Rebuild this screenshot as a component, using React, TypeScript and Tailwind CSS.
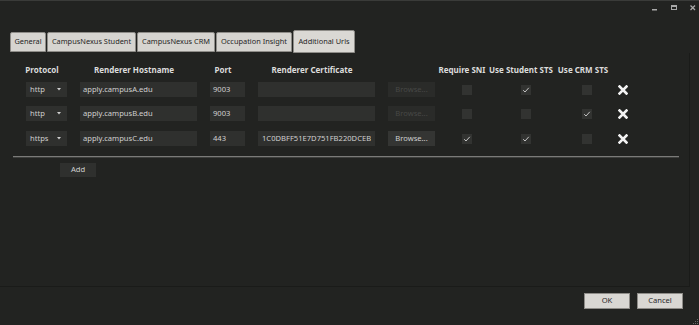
import React from "react";

const tabs = [
  { label: "General", w: 36, active: false },
  { label: "CampusNexus Student", w: 89, active: false },
  { label: "CampusNexus CRM", w: 78, active: false },
  { label: "Occupation Insight", w: 76, active: false },
  { label: "Additional Urls", w: 62, active: true },
];

type Row = {
  protocol: string;
  host: string;
  port: string;
  cert: string;
  browse: boolean;
  sni: boolean;
  student: boolean;
  crm: boolean;
};

const rows: Row[] = [
  { protocol: "http", host: "apply.campusA.edu", port: "9003", cert: "", browse: false, sni: false, student: true, crm: false },
  { protocol: "http", host: "apply.campusB.edu", port: "9003", cert: "", browse: false, sni: false, student: false, crm: true },
  { protocol: "https", host: "apply.campusC.edu", port: "443", cert: "1C0DBFF51E7D751FB220DCEB", browse: true, sni: true, student: true, crm: false },
];

function Check({ on, className }: { on: boolean; className: string }) {
  return (
    <div className={`flex-none w-[10px] h-[10px] bg-[#323331] flex items-center justify-center ${className}`}>
      {on && (
        <svg width="8" height="8" viewBox="0 0 8 8">
          <path d="M1.2 4.2 L3 6 L6.8 1.8" fill="none" stroke="#c4c4c4" strokeWidth="1" />
        </svg>
      )}
    </div>
  );
}

function Remove() {
  return (
    <svg className="flex-none ml-[26px]" width="10" height="10" viewBox="0 0 10 10">
      <path d="M1.5 1.5 L8.5 8.5 M8.5 1.5 L1.5 8.5" stroke="#f2f2f2" strokeWidth="2.6" strokeLinecap="square" />
    </svg>
  );
}

export default function App() {
  const font = "font-['Noto_Sans',sans-serif]";
  return (
    <div className={`relative w-[699px] h-[325px] bg-[#222321] flex flex-col overflow-hidden ${font} text-[7.6px]`}>
      <div className="h-px bg-[#3a3b39] flex-none" />
      {/* title bar */}
      <div className="h-[29px] flex-none flex justify-end items-start">
        <svg className="mt-[2px]" width="50" height="10" viewBox="0 0 50 10">
          <rect x="3" y="6" width="5" height="1.5" fill="#a8a8a8" />
          <rect x="22.5" y="2.5" width="5" height="4" fill="none" stroke="#a8a8a8" strokeWidth="1" />
          <rect x="22.5" y="2.5" width="5" height="1.5" fill="#a8a8a8" />
          <path d="M41.5 2.5 L46 7 M46 2.5 L41.5 7" stroke="#a8a8a8" strokeWidth="1.3" />
        </svg>
      </div>
      {/* tabs */}
      <div className="h-[23px] flex-none flex items-start pl-[10px] gap-[1px]">
        {tabs.map((t) => (
          <div
            key={t.label}
            style={{ width: t.w }}
            className={`flex-none flex items-center justify-center whitespace-nowrap text-[#262626] text-[7.4px] bg-[#d6d4d0] border border-[#8e8c88] rounded-t-[2px] ${
              t.active ? "h-[23px] bg-[#dad8d4]" : "h-[20px] mt-[2px]"
            }`}
          >
            {t.label}
          </div>
        ))}
      </div>
      {/* panel */}
      <div className="w-[690px] h-[234px] flex-none border-r border-b border-[#1a1b19] flex flex-col">
        {/* header */}
        <div className="mt-[11px] h-[11px] flex items-center font-bold text-[8px] text-[#dcdcdc] whitespace-nowrap">
          <span className="flex-none ml-[20px] w-[44px] text-center">Protocol</span>
          <span className="flex-none ml-[20px] w-[100px] text-center">Renderer Hostname</span>
          <span className="flex-none ml-[24px] w-[30px] text-center">Port</span>
          <span className="flex-none ml-[24px] w-[100px] text-center">Renderer Certificate</span>
          <span className="flex-none ml-[75px] w-[50px] text-center">Require SNI</span>
          <span className="flex-none ml-[1px] w-[66px] text-center">Use Student STS</span>
          <span className="flex-none ml-[1px] w-[56px] text-center">Use CRM STS</span>
        </div>
        {rows.map((r, i) => (
          <div
            key={i}
            className={`h-[15px] flex items-center text-[#cfcfcf] whitespace-nowrap ${
              i === 0 ? "mt-[7px]" : i === 1 ? "mt-[9px]" : "mt-[10px]"
            }`}
          >
            <div className="flex-none ml-[26px] w-[41px] h-[15px] bg-[#2f302e] flex items-center pl-[4px]">
              <span className="flex-1">{r.protocol}</span>
              <svg className="mr-[6px]" width="4" height="3" viewBox="0 0 4 3">
                <path d="M0 0 L4 0 L2 2.5 Z" fill="#cfcfcf" />
              </svg>
            </div>
            <div className="flex-none ml-[13px] w-[117px] h-[15px] bg-[#2f302e] flex items-center pl-[3px]">{r.host}</div>
            <div className="flex-none ml-[13px] w-[35px] h-[15px] bg-[#2f302e] flex items-center pl-[3px]">{r.port}</div>
            <div className="flex-none ml-[13px] w-[117px] h-[15px] bg-[#2f302e] flex items-center pl-[4px] overflow-hidden">
              <span className="block overflow-hidden whitespace-nowrap">{r.cert}</span>
            </div>
            <div
              className={`flex-none ml-[13px] w-[47px] h-[15px] flex items-center justify-center ${
                r.browse ? "bg-[#343533] text-[#cfcfcf]" : "bg-[#2a2b29] text-[#474846]"
              }`}
            >
              Browse...
            </div>
            <Check on={r.sni} className="ml-[27px]" />
            <Check on={r.student} className="ml-[49px]" />
            <Check on={r.crm} className="ml-[51px]" />
            <Remove />
          </div>
        ))}
        <div className="mt-[10px] ml-[13px] w-[666px] h-[2px] flex-none flex flex-col">
          <div className="h-px bg-[#7a7a78]" />
          <div className="h-px bg-[#3e3f3d]" />
        </div>
        <div className="mt-[5px] ml-[60px] w-[36px] h-[14px] flex-none bg-[#2f302e] text-[#d0d0d0] flex items-center justify-center">
          Add
        </div>
      </div>
      {/* buttons */}
      <div className="mt-[6px] h-[16px] flex-none flex">
        <div className="ml-[584px] w-[46px] h-[16px] flex-none bg-[#d9d7d3] border border-[#8e8c88] text-[#2a2a2a] flex items-center justify-center">
          OK
        </div>
        <div className="ml-[7px] w-[46px] h-[16px] flex-none bg-[#d9d7d3] border border-[#8e8c88] text-[#2a2a2a] flex items-center justify-center">
          Cancel
        </div>
      </div>
      <svg className="absolute right-0 bottom-0" width="7" height="7" viewBox="0 0 7 7">
        <rect x="5" y="1" width="1" height="1" fill="#6a6a6a" />
        <rect x="3" y="3" width="1" height="1" fill="#6a6a6a" />
        <rect x="5" y="3" width="1" height="1" fill="#6a6a6a" />
        <rect x="1" y="5" width="1" height="1" fill="#6a6a6a" />
        <rect x="3" y="5" width="1" height="1" fill="#6a6a6a" />
        <rect x="5" y="5" width="1" height="1" fill="#6a6a6a" />
      </svg>
    </div>
  );
}
